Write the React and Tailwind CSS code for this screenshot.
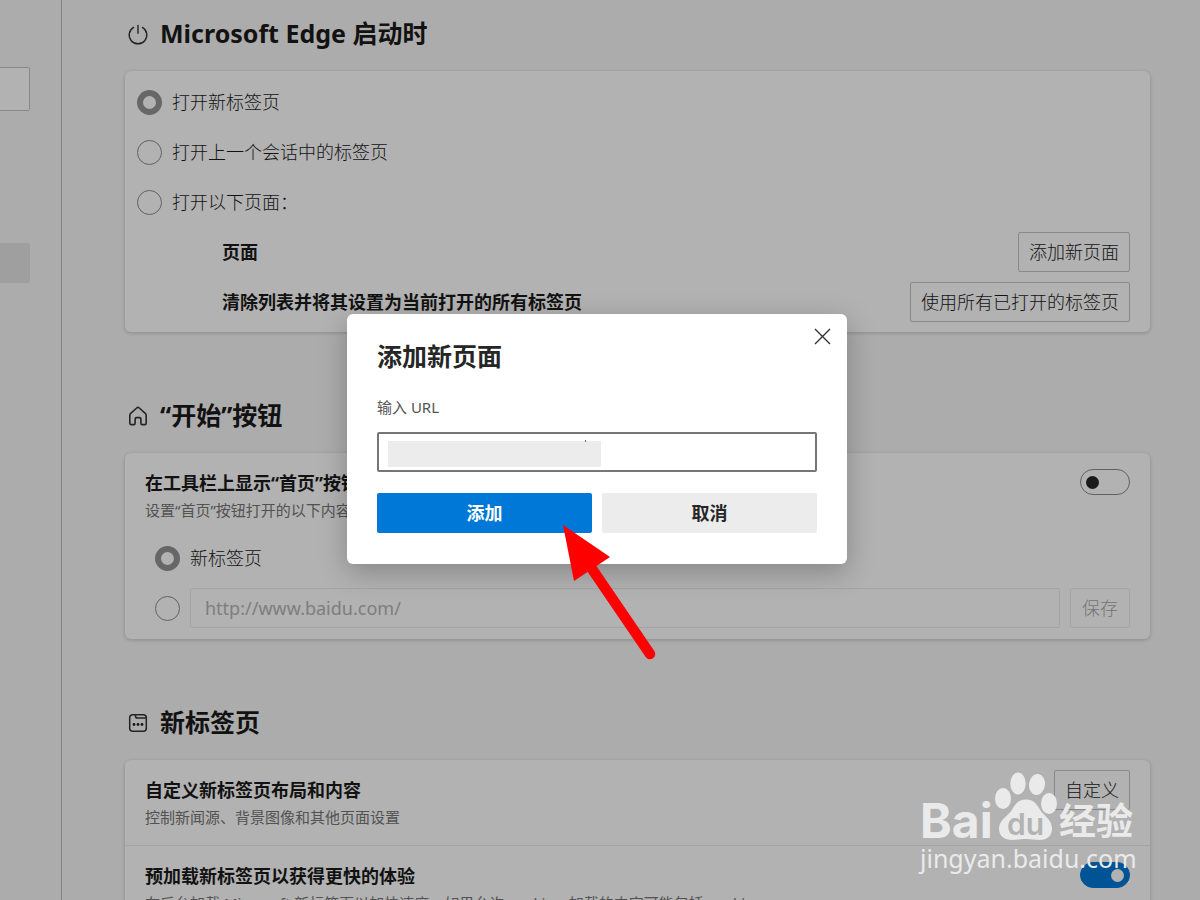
import React, { useState } from "react";

const PowerIcon = () => (
  <svg width="22" height="22" viewBox="0 0 22 22" fill="none" stroke="#333" strokeWidth="1.4" strokeLinecap="round">
    <path d="M11 2.4v7.8" />
    <path d="M6.6 4.4a8.8 8.8 0 1 0 8.8 0" />
  </svg>
);

const HomeIcon = () => (
  <svg width="22" height="22" viewBox="0 0 22 22" fill="none" stroke="#333" strokeWidth="1.6" strokeLinejoin="round">
    <path d="M2.8 10.4c0-.8.3-1.5.9-2l6-5.4c.8-.7 1.8-.7 2.6 0l6 5.4c.6.5.9 1.2.9 2v7.8c0 .8-.6 1.4-1.4 1.4h-2.5c-.8 0-1.4-.6-1.4-1.4v-4.2c0-.8-.6-1.4-1.4-1.4h-3c-.8 0-1.4.6-1.4 1.4v4.2c0 .8-.6 1.4-1.4 1.4H4.200c-.8 0-1.400-.6-1.400-1.400z" />
  </svg>
);

const TabIcon = () => (
  <svg width="22" height="22" viewBox="0 0 22 22" fill="none" stroke="#333" strokeWidth="1.5">
    <rect x="2.7" y="2.7" width="16.6" height="16.6" rx="3" />
    <path d="M8.5 2.7v1.2c0 1.3.9 2.2 2.2 2.2h8.2" />
    <g fill="#222" stroke="none">
      <circle cx="7" cy="12.5" r="1.4" />
      <circle cx="11" cy="12.5" r="1.4" />
      <circle cx="15" cy="12.5" r="1.4" />
    </g>
  </svg>
);

const Section = ({ icon, title, children }) => (
  <section>
    <h2 className="mb-[17px] flex h-10 items-center gap-[11px] pl-0.5 text-[25px] font-bold text-[#1b1b1b]">
      {icon}
      {title}
    </h2>
    <div className="rounded-md bg-white shadow-[0_1px_4px_rgba(0,0,0,0.2)]">{children}</div>
  </section>
);

const Radio = ({ label, ...props }) => (
  <label className="flex h-[50px] items-center gap-2.5 text-[18px] font-light text-[#1b1b1b]">
    <input
      type="radio"
      className="size-[25px] shrink-0 appearance-none rounded-full border border-[#8c8c8c] checked:border-[6px] checked:border-[#949494]"
      {...props}
    />
    {label}
  </label>
);

const OutlineButton = ({ children }) => (
  <button className="h-10 shrink-0 rounded-xs border border-[#c4c4c4] px-2.5 text-[18px] font-light text-[#1b1b1b]">
    {children}
  </button>
);

const Toggle = ({ label, defaultChecked }) => (
  <input
    type="checkbox"
    role="switch"
    aria-label={label}
    defaultChecked={defaultChecked}
    className="flex h-[26px] w-[50px] shrink-0 appearance-none items-center rounded-full border border-[#8c8c8c] px-[5px] before:size-[13px] before:rounded-full before:bg-[#262626] checked:justify-end checked:border-[#0078d4] checked:bg-[#0078d4] checked:before:bg-white"
  />
);

const SettingText = ({ title, desc }) => (
  <div className="min-w-0 flex-1 whitespace-nowrap">
    <div className="text-[18px] leading-7 font-bold text-[#1b1b1b]">{title}</div>
    <div className="text-[15px] leading-[26px] text-[#767676]">{desc}</div>
  </div>
);

const PageRow = ({ title, action }) => (
  <div className="flex h-[50px] items-center justify-between pl-[85px] text-[18px] text-[#1b1b1b]">
    <span className="font-bold">{title}</span>
    <OutlineButton>{action}</OutlineButton>
  </div>
);

const Watermark = () => (
  <div className="pointer-events-none absolute right-[64px] bottom-[29px] w-[216px] text-[#eaeaea]">
    <svg width="216" height="73" viewBox="0 0 216 73" fill="currentColor" className="block overflow-visible">
      <text x="0" y="66" fontFamily="Inter, sans-serif" fontWeight="700" fontSize="48">Bai</text>
      <ellipse cx="83" cy="26.5" rx="8" ry="10.5" />
      <ellipse cx="98" cy="11.5" rx="7.7" ry="11" />
      <ellipse cx="117" cy="12.5" rx="8" ry="10.5" transform="rotate(8 117 12.5)" />
      <ellipse cx="129" cy="31.5" rx="8" ry="10.5" />
      <path d="M106 27.5c-10 0-12 8-16 13-5 5-11 9-11 16 0 8 6 11.5 13 11.5 5 0 9-1 14-1s9 1 14 1c7 0 12-4 12-11.5 0-7-5-11-10-16-4-5-6-13-16-13z" />
      <text x="87" y="63" fill="#b3b3b3" fontFamily="Inter, sans-serif" fontWeight="600" fontSize="30">du</text>
      <text x="139" y="63" fontFamily="'Noto Sans CJK SC', sans-serif" fontWeight="700" fontSize="37">经验</text>
    </svg>
    <div className="text-[25px] leading-[26px]">jingyan.baidu.com</div>
  </div>
);

const AddPageDialog = ({ onClose }) => (
  <div role="dialog" aria-labelledby="dialog-title" className="relative w-[500px] rounded-md bg-white px-[30px] pt-[25px] pb-[31px] shadow-[0_8px_28px_rgba(0,0,0,0.25)]">
    <button aria-label="关闭" onClick={onClose} className="absolute top-[14px] right-4">
      <svg width="17" height="17" viewBox="0 0 17 17" stroke="#333" strokeWidth="1.4">
        <path d="M1 1l15 15M16 1L1 16" />
      </svg>
    </button>
    <h1 id="dialog-title" className="text-[25px] leading-[34px] font-bold text-[#262626]">添加新页面</h1>
    <label htmlFor="url" className="mt-[22px] block text-[15px] leading-6 text-[#555]">输入 URL</label>
    <div className="relative mt-[13px]">
      <input id="url" className="block h-10 w-full rounded-xs border-2 border-[#767676] px-3 text-[18px]" />
      <span className="absolute top-[9px] left-[11px] h-[26px] w-[213px] bg-[#ececec]" />
      <span className="absolute top-2 left-[208px] h-0.5 w-px bg-[#777]" />
    </div>
    <div className="mt-[21px] grid grid-cols-2 gap-2.5 text-[18px] font-bold">
      <button className="h-10 rounded-xs bg-[#0078d7] text-white">添加</button>
      <button className="h-10 rounded-xs bg-[#ececec] text-[#262626]" onClick={onClose}>取消</button>
    </div>
    {/* pointer to the confirm button */}
    <svg className="pointer-events-none absolute top-[210px] left-[215px]" width="96" height="138" viewBox="0 0 96 138">
      <path d="M28 42L88 130" stroke="#ff0000" strokeWidth="10.5" strokeLinecap="round" />
      <path d="M1 1L48 33L12 57z" fill="#ff0000" />
    </svg>
  </div>
);

const App = () => {
  const [open, setOpen] = useState(true);

  return (
    <div className="relative flex h-screen overflow-hidden bg-[#f7f7f7] font-['Noto_Sans','Noto_Sans_CJK_SC',sans-serif]">
      <aside className="w-[62px] shrink-0 border-r border-[#bbb] pt-[67px]">
        <input aria-label="搜索设置" className="block h-11 w-[30px] rounded-r-xs border border-l-0 border-[#c4c4c4] bg-white" />
        <div className="mt-[132px] h-10 w-[30px] rounded-r-xs bg-[#e4e4e4]" />
      </aside>

      <main className="flex min-w-0 flex-1 flex-col gap-16 pt-[14px] pr-[50px] pl-[63px]">
        <Section icon={<PowerIcon />} title="Microsoft Edge 启动时">
          <div className="pt-1.5 pr-5 pb-[5px] pl-3">
            <Radio name="startup" label="打开新标签页" defaultChecked />
            <Radio name="startup" label="打开上一个会话中的标签页" />
            <Radio name="startup" label="打开以下页面：" />
            <PageRow title="页面" action="添加新页面" />
            <PageRow title="清除列表并将其设置为当前打开的所有标签页" action="使用所有已打开的标签页" />
          </div>
        </Section>

        <Section icon={<HomeIcon />} title="“开始”按钮">
          <div className="px-5 pt-4 pb-1.5">
            <div className="mb-2.5 flex items-start">
              <SettingText title="在工具栏上显示“首页”按钮" desc="设置“首页”按钮打开的以下内容:" />
              <Toggle label="在工具栏上显示“首页”按钮" />
            </div>
            <div className="pl-2.5">
              <Radio name="home" label="新标签页" defaultChecked />
              <div className="flex items-center gap-2.5">
                <Radio name="home" aria-label="网址" />
                <input
                  aria-label="首页网址"
                  placeholder="http://www.baidu.com/"
                  disabled
                  className="h-10 min-w-0 flex-1 rounded-xs border border-[#ebebeb] px-3.5 text-[18px] placeholder:text-[#b5b5b5]"
                />
                <button disabled className="h-10 w-[60px] rounded-xs border border-[#ebebeb] text-[18px] font-light text-[#a8a8a8]">
                  保存
                </button>
              </div>
            </div>
          </div>
        </Section>

        <Section icon={<TabIcon />} title="新标签页">
          <div className="flex items-start border-b border-[#ebebeb] px-5 pt-4 pb-[15px]">
            <SettingText title="自定义新标签页布局和内容" desc="控制新闻源、背景图像和其他页面设置" />
            <div className="-mt-1.5">
              <OutlineButton>自定义</OutlineButton>
            </div>
          </div>
          <div className="flex items-start px-5 pt-4 pb-[15px]">
            <SettingText
              title="预加载新标签页以获得更快的体验"
              desc="在后台加载 Microsoft 新标签页以加快速度。如果允许 cookie，加载的内容可能包括 cookie"
            />
            <Toggle label="预加载新标签页以获得更快的体验" defaultChecked />
          </div>
        </Section>
      </main>

      {open && (
        <div className="absolute inset-0 flex items-center justify-center bg-black/30 pr-1.5 pb-[22px]">
          <AddPageDialog onClose={() => setOpen(false)} />
        </div>
      )}
      <Watermark />
    </div>
  );
};

export default App;
